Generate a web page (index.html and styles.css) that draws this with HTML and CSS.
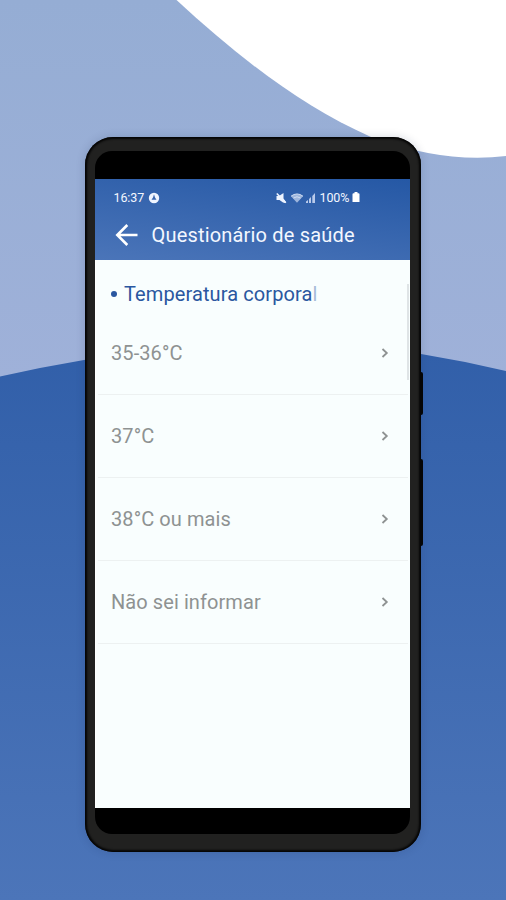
FILE: index.html
```html
<!DOCTYPE html>
<html lang="pt-BR">
<head>
<meta charset="utf-8">
<title>Questionário de saúde</title>
<link rel="stylesheet" href="styles.css">
</head>
<body>
<svg class="backdrop" viewBox="0 0 506 900" aria-hidden="true">
  <defs>
    <linearGradient id="sky" x1="0" y1="0" x2="0" y2="1"><stop offset="0" stop-color="#95add4"/><stop offset="1" stop-color="#9fb1d9"/></linearGradient>
    <linearGradient id="hill" x1="0" y1="0" x2="0" y2="1"><stop offset="0" stop-color="#315fa9"/><stop offset="1" stop-color="#4c75b9"/></linearGradient>
  </defs>
  <rect width="506" height="380" fill="url(#sky)"/>
  <path d="M176.500 0C235 54 300 106 371 137Q445 164 506 156V0Z" fill="#fff"/>
  <path d="M0 376.500Q42 367 84 360Q252 329 421 354Q464 361 506 371V900H0Z" fill="url(#hill)"/>
</svg>
<main class="phone">
  <span class="key key-short"></span>
  <span class="key key-long"></span>
  <div class="glass">
    <header class="top">
      <div class="status">
        <span class="time">16:37</span>
        <svg class="badge" viewBox="0 0 12 12"><circle cx="6" cy="6" r="5.200" fill="#f0f5ff"/><path d="M6 2.200L7 5.500L8.500 7.800H3.500L5 5.500Z" fill="#3a66ae"/></svg>
        <svg class="signals" viewBox="0 0 42 12">
          <path d="M1.500 4H4L8.500 1V6.500L11 10L10 11L8 10.500L4.500 8H1.500Z" fill="#eef4ff"/><path d="M1.800 1.500L10.800 10.700" stroke="#eef4ff" stroke-width="1.600"/>
          <path d="M16 4.200Q22 -.3 28 4.200L22 10.800Z" fill="#9db5dc"/><path d="M16 4.200Q22 -.3 28 4.200M18.500 6Q22 3.500 25.500 6" fill="none" stroke="#cfdcf2"/>
          <path d="M31 11V9.500L33 8V11ZM34 11V7L36 5V11ZM37.300 11V4L40 1V11Z" fill="#b9caea"/>
        </svg>
        <span class="percent">100%</span>
        <svg class="battery" viewBox="0 0 8 11"><path d="M2.500 0H5.500V1.300H6.500Q7.500 1.300 7.500 2.300V10H.5V2.300Q.5 1.300 1.500 1.300H2.500Z" fill="#fff"/></svg>
      </div>
      <div class="bar">
        <svg class="back" viewBox="0 0 24 24"><path d="M12.300 2L2.300 12L12.300 22M2.300 12H22.500" fill="none" stroke="#fff" stroke-width="2.600"/></svg>
        <h1 class="title">Questionário de saúde</h1>
      </div>
    </header>
    <section class="content">
      <h2 class="question"><span class="dot"></span><span>Temperatura corpora<span class="fade">l</span></span></h2>
      <ul class="options">
        <li class="option"><span>35-36°C</span><svg class="chevron" viewBox="0 0 8 12"><path d="M1.500 2L5.800 6L1.500 10"/></svg></li>
        <li class="option"><span>37°C</span><svg class="chevron" viewBox="0 0 8 12"><path d="M1.500 2L5.800 6L1.500 10"/></svg></li>
        <li class="option"><span>38°C ou mais</span><svg class="chevron" viewBox="0 0 8 12"><path d="M1.500 2L5.800 6L1.500 10"/></svg></li>
        <li class="option"><span>Não sei informar</span><svg class="chevron" viewBox="0 0 8 12"><path d="M1.500 2L5.800 6L1.500 10"/></svg></li>
      </ul>
      <span class="scrollbar"></span>
    </section>
  </div>
</main>
</body>
</html>
```
FILE: styles.css
```css
* { box-sizing: border-box; }
body {
  margin: 0;
  width: 506px;
  height: 900px;
  overflow: hidden;
  padding: 137px 0 0 84.5px;
  font-family: Roboto, "Liberation Sans", sans-serif;
}
.backdrop {
  position: absolute;
  left: 0;
  top: 0;
  width: 506px;
  height: 900px;
  z-index: -1;
}
.phone {
  position: relative;
  width: 336px;
  height: 715px;
  padding: 14px 10.5px 18px 10.5px;
  border-radius: 28px;
  background: #212120;
  box-shadow: inset 0 0 2px 2px #050505, 0 0 10px rgba(20, 40, 80, .18);
}
.key {
  position: absolute;
  left: 335px;
  width: 3px;
  background: #050505;
  border-radius: 0 2px 2px 0;
}
.key-short { top: 235px; height: 43px; }
.key-long { top: 322px; height: 87px; }
.glass {
  height: 683px;
  padding: 28px 0 26px;
  border-radius: 17px;
  background: #000;
}
.top {
  height: 81px;
  background: linear-gradient(188deg, #2558a5, #4b75b9);
  color: #f3f7ff;
}
.status {
  display: flex;
  align-items: center;
  height: 37px;
  padding-left: 18.5px;
  font-size: 12.5px;
}
.time { width: 31px; letter-spacing: -.1px; }
.badge { width: 12px; height: 12px; margin-left: 3.5px; }
.signals { width: 42px; height: 12px; margin-left: 115px; }
.percent { width: 30px; margin-left: 2.5px; letter-spacing: -.1px; white-space: nowrap; }
.battery { width: 8px; height: 11px; margin-left: 2px; }
.bar {
  display: flex;
  align-items: center;
  height: 38px;
  padding-left: 20px;
}
.back { width: 24px; height: 24px; }
.title {
  margin: 0 0 0 12.5px;
  font-size: 20px;
  font-weight: 400;
  letter-spacing: .18px;
  white-space: nowrap;
}
.content {
  position: relative;
  height: 548px;
  padding-top: 17px;
  background: #f9fefe;
  border-left: 1px solid #fff;
}
.question {
  display: flex;
  align-items: center;
  gap: 7px;
  height: 33px;
  margin: 0;
  padding-left: 15px;
  color: #2a57a0;
  font-size: 20px;
  font-weight: 400;
  letter-spacing: .1px;
}
.dot { width: 6px; height: 6px; border-radius: 50%; background: #2a57a0; }
.fade { opacity: .4; }
.options { margin: 2px 2px 0 0; padding: 0 0 0 2px; list-style: none; }
.option {
  display: flex;
  align-items: center;
  justify-content: space-between;
  height: 83px;
  padding: 0 19px 0 13px;
  border-bottom: 1px solid #edf1f1;
  color: #8e9292;
  font-size: 20px;
  letter-spacing: .08px;
}
.chevron { width: 8px; height: 12px; }
.chevron path { fill: none; stroke: #8e9292; stroke-width: 1.8; }
.scrollbar {
  position: absolute;
  right: 1px;
  top: 24px;
  width: 2px;
  height: 96px;
  background: #dfe4e6;
}
```
